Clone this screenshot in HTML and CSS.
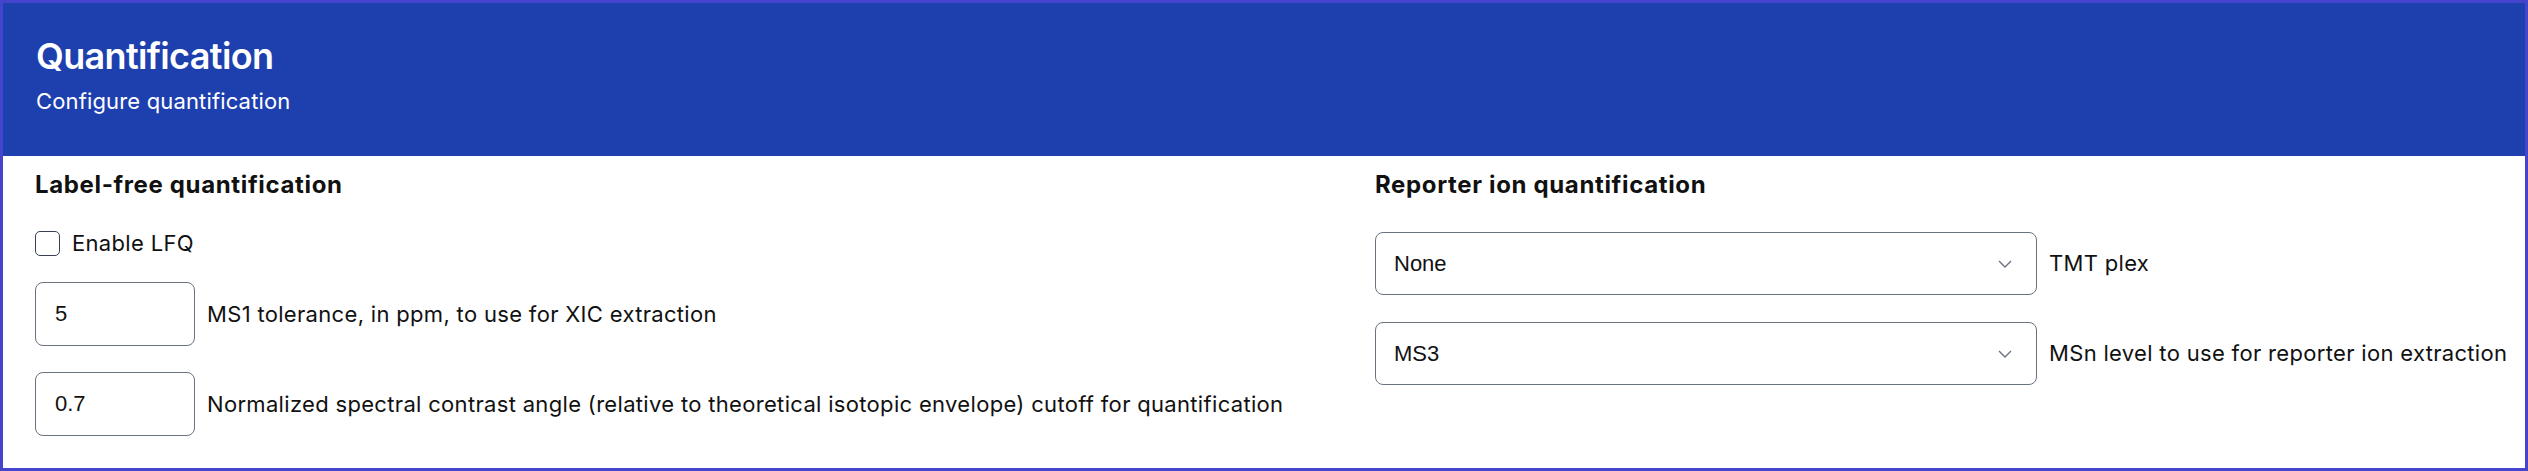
FILE: index.html
```html
<!DOCTYPE html>
<html lang="en">
<head>
    <meta charset="UTF-8">
    <meta name="viewport" content="width=device-width, initial-scale=1.0">
    <title>Quantification</title>
    <link rel="stylesheet" href="styles.css">
</head>
<body>
    <div class="panel">
        <header class="panel-head">
            <h2 class="panel-title">Quantification</h2>
            <p class="panel-sub">Configure quantification</p>
        </header>
        <div class="panel-body">
            <section class="group">
                <h3 class="group-title">Label-free quantification</h3>
                <label class="check-row">
                    <input type="checkbox" class="check">
                    <span class="field-label">Enable LFQ</span>
                </label>
                <div class="field-row first-input">
                    <input type="text" class="num-input" value="5">
                    <span class="field-label">MS1 tolerance, in ppm, to use for XIC extraction</span>
                </div>
                <div class="field-row">
                    <input type="text" class="num-input" value="0.7">
                    <span class="field-label">Normalized spectral contrast angle (relative to theoretical isotopic envelope) cutoff for quantification</span>
                </div>
            </section>
            <section class="group">
                <h3 class="group-title">Reporter ion quantification</h3>
                <div class="field-row first-select">
                    <div class="select-wrap">
                        <select class="select">
                            <option>None</option>
                        </select>
                        <svg class="chevron" width="14" height="8" viewBox="0 0 14 8"><path d="M1 1l6 6 6-6" fill="none" stroke="#6b7280" stroke-width="1.4"/></svg>
                    </div>
                    <span class="field-label">TMT plex</span>
                </div>
                <div class="field-row select-row">
                    <div class="select-wrap">
                        <select class="select">
                            <option>MS3</option>
                        </select>
                        <svg class="chevron" width="14" height="8" viewBox="0 0 14 8"><path d="M1 1l6 6 6-6" fill="none" stroke="#6b7280" stroke-width="1.4"/></svg>
                    </div>
                    <span class="field-label">MSn level to use for reporter ion extraction</span>
                </div>
            </section>
        </div>
    </div>
</body>
</html>
```

FILE: styles.css
```css
* {
    box-sizing: border-box;
}
body {
    margin: 0;
    font-family: Inter, "Noto Sans", sans-serif;
    color: #111;
    background: white;
}
.panel {
    height: 471px;
    border: 3px solid #4444cc;
    display: flex;
    flex-direction: column;
}
.panel-head {
    background-color: #1e40af;
    color: white;
    padding: 33px 33px 38px;
    height: 153px;
}
.panel-title {
    margin: 0;
    font-size: 36px;
    line-height: 40px;
    font-weight: 600;
    letter-spacing: -0.65px;
}
.panel-sub {
    margin: 9px 0 0;
    font-size: 22px;
    line-height: 33px;
    letter-spacing: 0.15px;
}
.panel-body {
    display: grid;
    grid-template-columns: 1340px 1fr;
    padding: 13px 32px 32px;
}
.group {
    display: flex;
    flex-direction: column;
    align-items: flex-start;
}
.group-title {
    margin: 0;
    font-size: 24px;
    line-height: 32px;
    font-weight: 700;
    letter-spacing: 0.65px;
}
.check-row {
    display: flex;
    align-items: center;
    gap: 12px;
    height: 33px;
    margin-top: 26px;
}
.check {
    appearance: none;
    margin: 0;
    width: 25px;
    height: 25px;
    border: 1.5px solid #374151;
    border-radius: 5px;
    background: white;
}
.field-label {
    font-size: 22px;
    line-height: 33px;
    letter-spacing: 0.32px;
    white-space: nowrap;
}
.field-row {
    display: flex;
    align-items: center;
    gap: 12px;
    margin-top: 26px;
}
.field-row.first-input {
    margin-top: 22px;
}
.field-row.first-select {
    margin-top: 31px;
}
.field-row.select-row {
    margin-top: 27px;
}
.num-input {
    width: 160px;
    height: 64px;
    padding: 0 19px;
    border: 1px solid #6b7280;
    border-radius: 8px;
    font-family: "Liberation Sans", Arial, sans-serif;
    font-size: 22px;
    color: #111;
}
.select-wrap {
    position: relative;
    width: 662px;
    height: 63px;
}
.select {
    appearance: none;
    width: 100%;
    height: 100%;
    padding: 0 50px 0 18px;
    border: 1px solid #6b7280;
    border-radius: 8px;
    background: white;
    font-family: "Liberation Sans", Arial, sans-serif;
    font-size: 22px;
    color: #111;
}
.chevron {
    position: absolute;
    right: 25px;
    top: 28px;
    pointer-events: none;
}
```
